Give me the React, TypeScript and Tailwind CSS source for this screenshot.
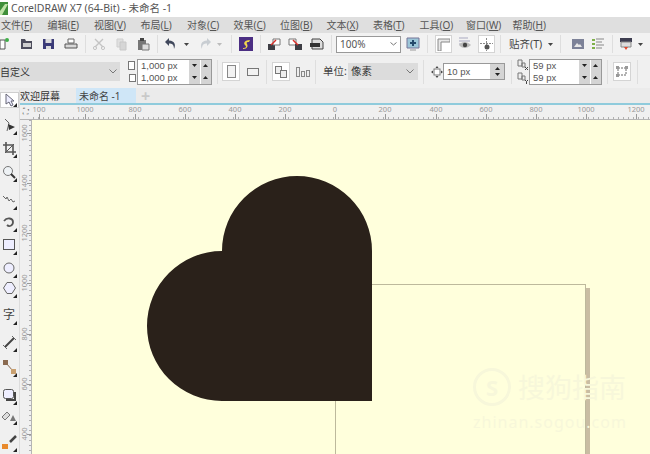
import type { ReactNode } from "react";

const menus = [
  ["文件", "F"],
  ["编辑", "E"],
  ["视图", "V"],
  ["布局", "L"],
  ["对象", "C"],
  ["效果", "C"],
  ["位图", "B"],
  ["文本", "X"],
  ["表格", "T"],
  ["工具", "O"],
  ["窗口", "W"],
  ["帮助", "H"],
];

const hLabels = [
  ["100", 39],
  ["1000", 85],
  ["800", 135],
  ["600", 185],
  ["400", 235],
  ["200", 285],
  ["0", 335],
  ["200", 385],
  ["400", 436],
  ["600", 486],
  ["800", 536],
  ["1000", 586],
  ["1200", 636],
] as const;

const vLabels = [
  ["1600", 133],
  ["1400", 183],
  ["1200", 233],
  ["1000", 283],
  ["800", 334],
  ["600", 384],
  ["400", 434],
] as const;

const Ico = ({ w = 16, className = "", children }: { w?: number; className?: string; children: ReactNode }) => (
  <svg width={w} height={16} viewBox={`0 0 ${w} 16`} fill="none" className={"shrink-0 " + className}>
    {children}
  </svg>
);

const Sep = ({ className = "" }: { className?: string }) => (
  <div className={"w-px h-[18px] bg-[#dedede] shrink-0 " + className} />
);

const Arrow = ({ className = "" }: { className?: string }) => (
  <svg width="5" height="3" viewBox="0 0 5 3" className={"shrink-0 " + className}>
    <path d="M0 0h5L2.5 3z" fill="#444" />
  </svg>
);

const Spin = () => (
  <div className="w-[22px] h-full flex shrink-0 bg-[#d4d4d4]">
    <div className="flex-1 flex items-center justify-center border-r border-white">
      <svg width="5" height="3"><path d="M0 0h5L2.5 3z" fill="#222" /></svg>
    </div>
    <div className="flex-1 flex items-center justify-center">
      <svg width="5" height="3"><path d="M0 3h5L2.5 0z" fill="#222" /></svg>
    </div>
  </div>
);

const Field = ({ value }: { value: string }) => (
  <div className="h-[12px] w-full flex items-center bg-white">
    <span className="flex-1 pl-[3px] font-['Liberation_Sans'] text-[9.5px] text-[#555] leading-none">{value}</span>
    <Spin />
  </div>
);

const ToolCorner = () => (
  <svg width="4" height="4" className="absolute right-[1px] bottom-0">
    <path d="M4 0v4H0z" fill="#222" />
  </svg>
);

const Tool = ({ children, className = "" }: { children: ReactNode; className?: string }) => (
  <div className={"relative w-[18px] h-[20px] flex items-center justify-center shrink-0 " + className}>
    {children}
    <ToolCorner />
  </div>
);

export default function App() {
  return (
    <div
      className="w-[650px] h-[454px] overflow-hidden flex flex-col bg-white text-[#333]"
      style={{ fontFamily: '"Noto Sans", "Noto Sans CJK SC", sans-serif' }}
    >
      {/* title */}
      <div className="h-[17px] flex items-center shrink-0 bg-white">
        <svg width="8" height="13" viewBox="0 0 8 13" className="shrink-0 mr-[3px]">
          <rect width="8" height="13" fill="#3f8f3a" />
          <path d="M0 9 5 2h3L2 13H0z" fill="#bfe3a8" />
        </svg>
        <span className="text-[10.5px] leading-none text-[#555]">CorelDRAW X7 (64-Bit) - 未命名 -1</span>
      </div>

      {/* menu */}
      <div className="h-[16px] flex items-center shrink-0 bg-[#dfdfdf] pl-[1px]">
        {menus.map(([n, k], i) => (
          <div key={i} className="w-[46.5px] shrink-0 text-[10px] leading-none text-[#555] whitespace-nowrap">
            {n}(<span className="underline">{k}</span>)
          </div>
        ))}
      </div>

      {/* standard toolbar */}
      <div className="h-[23px] flex items-center shrink-0 bg-[#f2f2f2] border-b border-[#e6e6e6]">
        <Ico w={9}>
          <path d="M0 4h5v9H0z" fill="#fff" stroke="#555" />
          <circle cx="7" cy="4" r="2" fill="#3fae49" />
        </Ico>
        <Ico className="ml-[10px]">
          <path d="M2 3h4l1 2h6v8H2z" fill="#4d4d5c" />
          <path d="M4 7h8v4H4z" fill="#cfcfcf" />
        </Ico>
        <Ico className="ml-[6px]">
          <path d="M2 3h11v10H2z" fill="#3b3b78" />
          <path d="M4.5 3h6v4h-6zM5 10h5v3H5z" fill="#ddd" />
        </Ico>
        <Ico className="ml-[6px]">
          <path d="M5 3h6v4H5z" fill="#fff" stroke="#666" />
          <path d="M2 8h12v4H2z" fill="#d8d8d8" stroke="#555" />
        </Ico>
        <Sep className="ml-[6px]" />
        <Ico className="ml-[6px]">
          <path d="M3 3l8 8M11 3l-8 8" stroke="#c4c4c4" strokeWidth="1.4" />
          <circle cx="3" cy="12" r="1.6" stroke="#c4c4c4" />
          <circle cx="11" cy="12" r="1.6" stroke="#c4c4c4" />
        </Ico>
        <Ico className="ml-[6px]">
          <path d="M3 3h6v8H3z" fill="#e0e0e0" stroke="#cfcfcf" />
          <path d="M6 6h6v8H6z" fill="#d6d6d6" stroke="#c8c8c8" />
        </Ico>
        <Ico className="ml-[5px]">
          <path d="M3 4h8v10H3z" fill="#777" />
          <path d="M5 2h4v3H5z" fill="#444" />
          <path d="M7 8h7v6H7z" fill="#ddd" stroke="#777" />
        </Ico>
        <Sep className="ml-[6px]" />
        <Ico className="ml-[5px]">
          <path d="M6 2 2 6l4 4V7.5c3 0 5 1 5 5.5 2-4 1-8-5-8.5z" fill="#40485c" />
        </Ico>
        <Arrow className="ml-[5px]" />
        <Ico className="ml-[8px]">
          <path d="M10 2l4 4-4 4V7.5c-3 0-5 1-5 5.5-2-4-1-8 5-8.5z" fill="#c8cdd2" />
        </Ico>
        <Arrow className="ml-[4px] opacity-30" />
        <Sep className="ml-[9px]" />
        <Ico className="ml-[5px]">
          <path d="M2 1h14v14H2z" fill="#4b2e83" />
          <path d="M6 12c3 0 4-1 2-3s0-5 5-5l-1 2c-2 0-3 .5-2 2s1 5-4 5z" fill="#f2d64b" />
        </Ico>
        <Sep className="ml-[7px]" />
        <Ico className="ml-[5px]">
          <path d="M2 8h7v6H2z" fill="#3d3d44" />
          <path d="M7 3h7v6H7z" fill="#fff" stroke="#777" />
          <path d="M5 9l5-5" stroke="#d8312c" strokeWidth="1.5" />
        </Ico>
        <Ico className="ml-[6px]">
          <path d="M1 3h7v6H1z" fill="#fff" stroke="#777" />
          <path d="M7 8h7v6H7z" fill="#3d3d44" />
          <path d="M5 4l5 5" stroke="#d8312c" strokeWidth="1.5" />
        </Ico>
        <Ico className="ml-[5px]">
          <path d="M3 3h8l3 3v7H3z" fill="#ddd" stroke="#444" />
          <path d="M1 7h10v4H1z" fill="#333" />
        </Ico>
        <Sep className="ml-[6px]" />
        <div className="ml-[4px] w-[65px] h-[17px] bg-white border border-[#999] flex items-center shrink-0">
          <span className="flex-1 pl-[3px] text-[10px] leading-none text-[#555]">100%</span>
          <svg width="7" height="4" className="mr-[3px]"><path d="M.5.5 3.5 3 6.5.5" stroke="#777" fill="none" /></svg>
        </div>
        <Ico className="ml-[4px]">
          <path d="M2 2h12v10H2z" fill="#9cc6d8" stroke="#779" />
          <path d="M5 7h6M8 4v6" stroke="#244a6b" strokeWidth="2" />
          <path d="M5 14h6" stroke="#999" />
        </Ico>
        <Sep className="ml-[6px]" />
        <div className="ml-[7px] w-[17px] h-[18px] bg-white border border-[#d4d4d4] flex items-center justify-center shrink-0">
          <svg width="13" height="13">
            <path d="M1 13V1h12v3H4v9z" fill="#e8e8e8" stroke="#888" />
          </svg>
        </div>
        <Ico className="ml-[5px]">
          <path d="M2 2h9M2 5h11M2 8h2" stroke="#a9a9c0" />
          <path d="M2 9c3-4 8-4 12 0-4 4-9 4-12 0z" fill="#bbb" />
          <circle cx="8" cy="9" r="2.2" fill="#444" />
        </Ico>
        <div className="ml-[5px] w-[17px] h-[18px] bg-white border border-[#d4d4d4] flex items-center justify-center shrink-0">
          <svg width="13" height="13">
            <path d="M6.5 0v13M0 5.5h13" stroke="#8a8a8a" strokeDasharray="2 1" />
            <circle cx="7" cy="9" r="2.5" fill="#555" />
          </svg>
        </div>
        <Sep className="ml-[5px]" />
        <span className="ml-[8px] w-[33px] text-[10.5px] leading-none text-[#444] whitespace-nowrap shrink-0">贴齐(T)</span>
        <Arrow className="ml-[6px]" />
        <Sep className="ml-[7px]" />
        <Ico className="ml-[9px]">
          <path d="M2 3h12v10H2z" fill="#7d8298" />
          <path d="M4 11l3-4 2 2 1-1 2 3z" fill="#e8e8e8" />
        </Ico>
        <Ico className="ml-[4px]">
          <path d="M2 4h3M2 8h3M2 12h3" stroke="#7fb04a" strokeWidth="2" />
          <path d="M6 3h8M6 6h6M6 9h8M6 12h6" stroke="#888" />
        </Ico>
        <Sep className="ml-[6px]" />
        <Ico className="ml-[5px]">
          <path d="M2 2h12v4H2z" fill="#3d3d50" />
          <path d="M3 6h10v5H3z" fill="#ddd" stroke="#888" />
          <path d="M6 11h4l-2 3z" fill="#e0492e" />
        </Ico>
        <Arrow className="ml-[4px]" />
      </div>

      {/* property bar */}
      <div className="h-[32px] flex items-center shrink-0 bg-[#f0f0f0] pb-[1px]">
        <div className="w-[122px] h-[19px] -ml-[2px] pl-[2px] bg-[#dcdcdc] flex items-center shrink-0">
          <span className="flex-1 text-[10px] leading-none text-[#333]">自定义</span>
          <svg width="8" height="5" className="mr-[3px]"><path d="M.5.5 4 4 7.5.5" stroke="#777" fill="none" /></svg>
        </div>
        <div className="flex flex-col gap-[1px] ml-[7px] shrink-0">
          <svg width="9" height="12"><rect x="1.5" y="2.5" width="6" height="8" stroke="#777" fill="#fff" /></svg>
          <svg width="9" height="12"><rect x="2.5" y="2.5" width="6" height="7" stroke="#777" fill="#fff" /></svg>
        </div>
        <div className="ml-[1px] w-[75px] h-[26px] border border-[#999] flex flex-col justify-between shrink-0 bg-white">
          <Field value="1,000 px" />
          <Field value="1,000 px" />
        </div>
        <Sep className="ml-[5px] h-[24px]" />
        <div className="ml-[4px] w-[18px] h-[19px] bg-white border border-[#d4d4d4] flex items-center justify-center shrink-0">
          <div className="w-[9px] h-[13px] border border-[#888] bg-[#f2f2f2]" />
        </div>
        <div className="ml-[7px] w-[12px] h-[8px] border border-[#777] bg-[#f2f2f2] shrink-0" />
        <Sep className="ml-[7px] h-[24px]" />
        <div className="ml-[5px] w-[18px] h-[19px] bg-white border border-[#d4d4d4] flex items-center justify-center shrink-0">
          <svg width="14" height="14">
            <rect x="1.5" y="1.5" width="6" height="7" stroke="#777" fill="#eee" />
            <rect x="6.5" y="5.5" width="6" height="7" stroke="#777" fill="#eee" />
          </svg>
        </div>
        <svg width="14" height="10" className="ml-[6px] shrink-0">
          <rect x=".5" y=".5" width="3" height="9" stroke="#888" fill="#eee" />
          <rect x="5.5" y="4.5" width="3" height="5" stroke="#888" fill="#eee" />
          <rect x="10.5" y="3.5" width="3" height="6" stroke="#888" fill="#eee" />
        </svg>
        <Sep className="ml-[5px] h-[24px]" />
        <span className="ml-[7px] w-[24px] text-[10.5px] leading-none text-[#444] whitespace-nowrap shrink-0">单位:</span>
        <div className="ml-[1px] w-[70px] h-[17px] pl-[3px] bg-[#dcdcdc] flex items-center shrink-0">
          <span className="flex-1 text-[10.5px] leading-none text-[#333]">像素</span>
          <svg width="8" height="5" className="mr-[4px]"><path d="M.5.5 4 4 7.5.5" stroke="#777" fill="none" /></svg>
        </div>
        <Sep className="ml-[5px] h-[24px]" />
        <svg width="12" height="12" viewBox="0 0 12 12" className="ml-[7px] shrink-0">
          <rect x="3" y="3" width="6" height="6" stroke="#777" fill="#fff" />
          <path d="M6 0 4.5 2h3zM6 12l-1.500-2h3zM0 6l2-1.500v3zM12 6l-2-1.500v3z" fill="#444" />
        </svg>
        <div className="w-[62px] h-[17px] border border-[#999] bg-white flex items-center shrink-0">
          <span className="flex-1 pl-[3px] font-['Liberation_Sans'] text-[9.5px] leading-none text-[#555]">10 px</span>
          <div className="w-[14px] h-full bg-[#d4d4d4] flex flex-col items-center justify-center gap-[3px]">
            <svg width="5" height="3"><path d="M0 3h5L2.500 0z" fill="#222" /></svg>
            <svg width="5" height="3"><path d="M0 0h5L2.500 3z" fill="#222" /></svg>
          </div>
        </div>
        <Sep className="ml-[6px] h-[24px]" />
        <div className="ml-[5px] flex flex-col gap-[1px] shrink-0">
          <svg width="12" height="12"><path d="M1 1h4v6H1zM5 4h3v4H5z" stroke="#777" fill="#eee" /><path d="M8 8l3 3M11 8l-3 3" stroke="#444" /></svg>
          <svg width="12" height="12"><path d="M1 1h4v6H1zM5 4h3v4H5z" stroke="#777" fill="#eee" /><path d="M8 8l1.500 1.500L11 8M9.500 9.500V12" stroke="#444" fill="none" /></svg>
        </div>
        <div className="w-[73px] h-[26px] border border-[#999] flex flex-col justify-between bg-white shrink-0">
          <Field value="59 px" />
          <Field value="59 px" />
        </div>
        <Sep className="ml-[5px] h-[24px]" />
        <div className="ml-[5px] w-[18px] h-[19px] bg-white border border-[#d4d4d4] flex items-center justify-center shrink-0">
          <svg width="14" height="14">
            <path d="M3 3h8v7H3z" stroke="#666" strokeDasharray="2 1" fill="none" />
            <path d="M1 1h3v3H1zM10 1h3v3h-3zM1 9h3v3H1z" fill="#999" />
          </svg>
        </div>
        <Sep className="ml-[6px] h-[24px]" />
      </div>

      {/* doc tabs */}
      <div className="h-[17px] flex items-stretch shrink-0 bg-[#ebebeb] border-b-2 border-[#8fcbdc] pl-[20px]">
        <div className="w-[58px] flex items-center text-[10px] leading-none text-[#333]">欢迎屏幕</div>
        <div className="w-[60px] -ml-[2px] pl-[3px] flex items-center bg-[#cfe6f7] text-[10px] leading-none text-[#444]">未命名 -1</div>
        <div className="ml-[3px] w-[13px] flex items-center justify-center text-[16px] leading-none text-[#c9c9c9] font-bold">+</div>
      </div>

      {/* workspace */}
      <div className="flex-1 flex min-h-0">
        <div className="w-[20px] shrink-0 bg-[#f0f0f0] flex flex-col -mt-[15px] pt-[2px] relative z-10 border-r border-[#dcdcdc]">
          <div className="h-[16px] bg-white border border-[#cfcfcf] relative flex items-center justify-center">
            <svg width="12" height="14" viewBox="0 0 12 14"><path d="M2 1v10l3-2 2 4 2-1-2-4h3z" fill="#eef" stroke="#667" /></svg>
            <ToolCorner />
          </div>
          <Tool className="mt-[7px]">
            <svg width="13" height="14" viewBox="0 0 13 14"><path d="M2 1l4 4-2 8" stroke="#666" fill="none" /><path d="M5 6l7 3-6 3z" fill="#333" /></svg>
          </Tool>
          <Tool className="mt-[3px]">
            <svg width="13" height="13" viewBox="0 0 13 13"><path d="M3 0v10h10M0 3h10v10" stroke="#555" strokeWidth="1.600" fill="none" /><path d="M2 11 11 2" stroke="#555" /></svg>
          </Tool>
          <Tool className="mt-[4px]">
            <svg width="14" height="14" viewBox="0 0 14 14"><circle cx="6" cy="6" r="4.500" stroke="#777" fill="#eef2f5" /><path d="M9 9l4 4" stroke="#333" strokeWidth="2" /></svg>
          </Tool>
          <Tool className="mt-[8px]">
            <svg width="14" height="14" viewBox="0 0 14 14"><path d="M1 3l3 3 1-2 2 4 2-2 2 3 2-1" stroke="#666" fill="none" /></svg>
          </Tool>
          <Tool className="mt-[2px]">
            <svg width="13" height="13" viewBox="0 0 13 13"><path d="M1 5c3-4 9-3 9 1 0 4-4 5-6 3" stroke="#555" strokeWidth="1.800" fill="none" /></svg>
          </Tool>
          <Tool className="mt-[3px]">
            <svg width="12" height="12"><rect x=".5" y=".5" width="11" height="10" stroke="#555" fill="#eef" /></svg>
          </Tool>
          <Tool className="mt-[3px]">
            <svg width="12" height="12"><circle cx="6" cy="6" r="5" stroke="#666" fill="#eef" /></svg>
          </Tool>
          <Tool>
            <svg width="13" height="12" viewBox="0 0 13 12"><path d="M4 .5h5L12.500 6 9 11.500H4L.5 6z" stroke="#666" fill="#eef" /></svg>
          </Tool>
          <Tool className="mt-[7px]">
            <span className="text-[12px] leading-none text-[#444]">字</span>
          </Tool>
          <Tool className="mt-[7px]">
            <svg width="13" height="13" viewBox="0 0 13 13"><path d="M2 11 11 2" stroke="#444" strokeWidth="2" /><path d="M0 9l4 4M9 0l4 4" stroke="#666" /></svg>
          </Tool>
          <Tool className="mt-[5px]">
            <svg width="13" height="14" viewBox="0 0 13 14"><path d="M3 3l7 8" stroke="#8a6a50" /><rect x="0" y="0" width="5" height="5" fill="#8a6a50" /><rect x="8" y="9" width="5" height="5" fill="#c9a070" /></svg>
          </Tool>
          <Tool className="mt-[8px]">
            <svg width="13" height="13"><rect x=".5" y=".5" width="10" height="9" rx="2" stroke="#555" fill="#eef" /><path d="M3 11h9V3" stroke="#444" strokeWidth="2" fill="none" /></svg>
          </Tool>
          <Tool>
            <svg width="14" height="13" viewBox="0 0 14 13"><path d="M0 8l5-5 3 3-5 5z" fill="#ddd" stroke="#777" /><path d="M8 12l3-6 3 6z" fill="#777" /></svg>
          </Tool>
          <Tool className="mt-[7px]">
            <svg width="15" height="14" viewBox="0 0 15 14"><path d="M14 1 8 7" stroke="#444" strokeWidth="2.500" /><path d="M0 9h6v5H0z" fill="#e8892c" /></svg>
          </Tool>
        </div>

        <div className="flex-1 flex flex-col min-w-0">
          <div className="h-[15px] shrink-0 relative bg-[#f0f0f0] border-b border-[#b5b5b5] overflow-hidden">
            <span className="absolute left-[3px] top-[2px] text-[8px] leading-none text-[#555]">⛶</span>
            {hLabels.map(([t, x], i) => (
              <span
                key={i}
                className="absolute top-[1px] -translate-x-1/2 text-[7.5px] leading-none text-[#999]"
                style={{ left: x - 20 }}
              >
                {t}
              </span>
            ))}
            {hLabels.map(([t, x], i) => (
              <div key={t + i} className="absolute bottom-0 w-px h-[5px] bg-[#999]" style={{ left: x - 20 }} />
            ))}
            <div className="absolute left-[13px] right-0 bottom-0 h-[2px] bg-[repeating-linear-gradient(90deg,#b0b0b0_0,#b0b0b0_1px,transparent_1px,transparent_5px)]" />
          </div>
          <div className="flex-1 flex min-h-0">
            <div className="w-[12px] shrink-0 relative bg-[#f0f0f0] border-r border-[#b5b5b5] overflow-hidden">
              {vLabels.map(([t, y], i) => (
                <span
                  key={i}
                  className="absolute left-[1px] -translate-y-1/2 text-[7.5px] leading-none text-[#999] [writing-mode:vertical-rl] rotate-180"
                  style={{ top: y - 120 }}
                >
                  {t}
                </span>
              ))}
              {vLabels.map(([t, y], i) => (
                <div key={t + i} className="absolute right-0 h-px w-[4px] bg-[#999]" style={{ top: y - 120 }} />
              ))}
              <div className="absolute right-0 top-0 bottom-0 w-[2px] bg-[repeating-linear-gradient(180deg,#b0b0b0_0,#b0b0b0_1px,transparent_1px,transparent_5px)]" />
            </div>
            <div className="flex-1 relative bg-[#ffffdc] overflow-hidden">
              {/* page, offsets relative to canvas at 32,120 */}
              <div className="absolute left-[303px] top-[164px] w-[251px] h-[300px] border border-[#bdb99c]" />
              <div className="absolute left-[554px] top-[168px] w-[4px] h-[300px] bg-[#c9bda3]" />
              <svg width="240" height="240" viewBox="0 0 240 240" className="absolute left-[108px] top-[50px]">
                <path d="M232 81A75 75 0 0 0 82 81A75 75 0 0 0 82 231L232 231Z" fill="#2a211a" />
              </svg>
              {/* watermark */}
              <div className="absolute left-[441px] top-[248px] flex flex-col items-start text-[#f7f7da]">
                <div className="flex items-center gap-[7px]">
                  <div className="w-[38px] h-[38px] rounded-full border-[3px] border-[#f7f7da] flex items-center justify-center text-[22px] font-bold leading-none">S</div>
                  <span className="text-[27px] leading-none whitespace-nowrap">搜狗指南</span>
                </div>
                <span className="mt-[8px] text-[16px] leading-none tracking-[1px] whitespace-nowrap">zhinan.sogou.com</span>
              </div>
            </div>
          </div>
        </div>
      </div>
    </div>
  );
}
